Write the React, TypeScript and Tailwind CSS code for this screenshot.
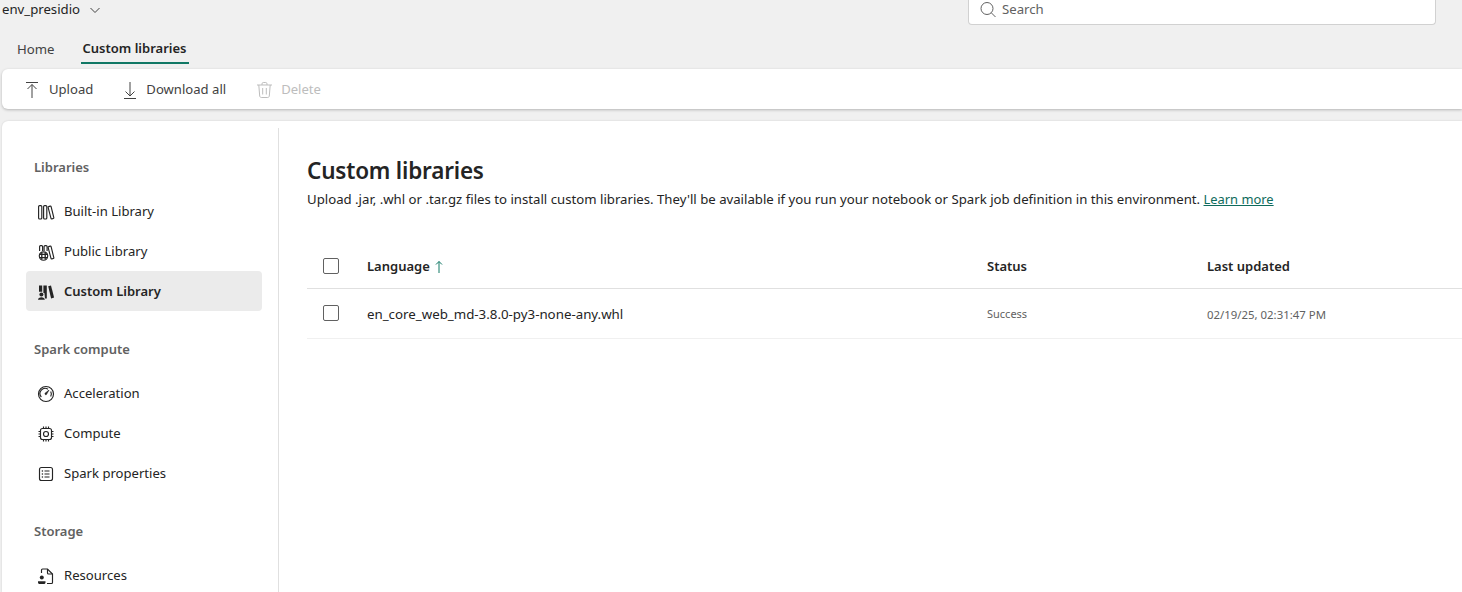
import React from "react";

const S = { fill: "none", stroke: "currentColor", strokeWidth: 1.15 } as const;

const Box = ({ children, className = "" }: { children: React.ReactNode; className?: string }) => (
  <svg width="20" height="20" viewBox="0 0 20 20" className={"shrink-0 " + className}>{children}</svg>
);

const Tilted = () => (
  <path d="M12.6 4.6l1.6-.5c.5-.1.8.1.9.5l2.7 11c.1.5-.1.8-.5.9l-1.4.4c-.5.1-.8-.1-.9-.5L12.1 5.4c-.1-.4.1-.7.5-.8z" {...S} />
);
const Books = () => (
  <Box>
    <rect x="2.6" y="3.6" width="3.2" height="13.4" rx="1" {...S} />
    <rect x="7.6" y="3.6" width="3.2" height="13.4" rx="1" {...S} />
    <Tilted />
  </Box>
);
const PublicBooks = () => (
  <Box>
    <path d="M3.600 9V4.600c0-.6.4-1 1-1h1c.6 0 1 .4 1 1V9M8.100 9V4.600c0-.6.4-1 1-1h1c.6 0 1 .4 1 1V9" {...S} />
    <Tilted />
    <circle cx="7.500" cy="14" r="4.200" {...S} />
    <path d="M5.800 10.500v7M9.200 10.500v7M3.500 12.400h8M3.500 15.600h8" fill="none" stroke="currentColor" strokeWidth="1.3" />
  </Box>
);
const CustomBooks = () => (
  <Box>
    <path d="M3 3.400h3.200v6.400H3zM7.400 3.400h3.400v7.600H7.400z" fill="currentColor" />
    <path d="M12.200 4.200l2.800-.8 3.100 12.200-3 .9z" fill="currentColor" />
    <circle cx="5.400" cy="12.400" r="2" fill="currentColor" />
    <path d="M2 17.800c0-1.700 1.500-2.600 3.400-2.600s3.400.9 3.400 2.600z" fill="currentColor" />
    <path d="M8.400 11h2.400v5.500H9z" fill="currentColor" />
  </Box>
);
const Gauge = () => (
  <Box>
    <circle cx="10" cy="10" r="7.5" {...S} />
    <path d="M5.300 13A5.200 5.200 0 0 1 12 5.200M14.700 7.500a5.200 5.200 0 0 1 0 5" {...S} />
    <path d="M9 9.300l4-3.200-2.600 4.500a1 1 0 0 1-1.400-1.300z" fill="currentColor" stroke="currentColor" strokeWidth="0.6" />
  </Box>
);
const Chip = () => (
  <Box>
    <rect x="4.500" y="4.500" width="11" height="11" rx="2" {...S} />
    <circle cx="10" cy="10" r="2.500" {...S} />
    <path d="M7.500 2.500v2M10 2.500v2M12.500 2.500v2M7.500 15.500v2M10 15.500v2M12.500 15.500v2M2.500 7.500h2M2.500 10h2M2.500 12.500h2M15.500 7.500h2M15.500 10h2M15.500 12.500h2" {...S} />
  </Box>
);
const Props = () => (
  <Box>
    <rect x="3.500" y="3.500" width="13" height="13" rx="2" {...S} />
    <path d="M8.500 7h5M8.500 10h5M8.500 13h5" {...S} />
    <circle cx="6.400" cy="7" r=".8" fill="currentColor" />
    <circle cx="6.400" cy="10" r=".8" fill="currentColor" />
    <circle cx="6.400" cy="13" r=".8" fill="currentColor" />
  </Box>
);
const ResourceFile = () => (
  <Box>
    <path d="M5.500 7V4c0-.6.4-1 1-1h5l5 5v8.500c0 .6-.4 1-1 1h-4.500" {...S} />
    <path d="M11.500 3v4c0 .6.4 1 1 1h4" {...S} />
    <circle cx="5.800" cy="11.600" r="2" fill="currentColor" />
    <path d="M2 15.200h7.500v1.300c0 .9-.7 1.500-1.600 1.500H3.600c-.9 0-1.600-.6-1.600-1.500z" fill="currentColor" />
  </Box>
);
const Trash = () => (
  <Box>
    <path d="M3 5h15M8 5V3.800c0-.8.6-1.300 1.300-1.300h2.400c.7 0 1.300.5 1.300 1.300V5M4.800 5l.9 11c.1.9.8 1.500 1.600 1.500h6.400c.8 0 1.500-.6 1.600-1.500l.9-11M8.700 8v6.500M12.300 8v6.500" fill="none" stroke="currentColor" strokeWidth="1" />
  </Box>
);

const Item = ({ icon, label, active = false }: { icon: React.ReactNode; label: string; active?: boolean }) => (
  <div className={"flex h-10 items-center gap-2 rounded-[4px] pl-[10px] pt-[2px] text-[#242424] " + (active ? "bg-[#ebebeb] text-[13px] font-semibold" : "text-[13.1px]")}>
    {icon}
    <span>{label}</span>
  </div>
);

const Section = ({ title, children }: { title: string; children: React.ReactNode }) => (
  <div>
    <div className="flex h-10 items-center pl-2 pt-[2px] text-[13px] font-semibold text-[#616161]">{title}</div>
    <div className="mt-[4px]">{children}</div>
  </div>
);

const Check = () => <div className="h-4 w-4 rounded-[2px] border border-[#616161] bg-white" />;

export default function App() {
  return (
    <div className="flex h-[592px] w-[1462px] flex-col overflow-hidden bg-[#f0f0f0] text-[#242424]" style={{ fontFamily: '"Noto Sans", sans-serif' }}>
      <div className="flex h-[25px] shrink-0 items-start justify-between pl-[2px] pr-[26px]">
        <div className="flex h-[19px] items-center gap-[9px] text-[13.2px]">
          <span>env_presidio</span>
          <svg width="12" height="12" viewBox="0 0 12 12" className="text-[#424242]"><path d="M1.500 4l4.500 4.500L10.500 4" fill="none" stroke="currentColor" /></svg>
        </div>
        <div className="flex h-[25px] w-[468px] items-center gap-[4px] rounded-b-[4px] border border-t-0 border-[#d1d1d1] bg-white pb-[5px] pl-[11px]">
          <svg width="18" height="18" viewBox="0 0 18 18" className="text-[#616161]"><circle cx="7" cy="7.500" r="6" fill="none" stroke="currentColor" /><path d="M11.300 11.800l4.200 4.200" fill="none" stroke="currentColor" /></svg>
          <span className="text-[13.2px] text-[#616161]">Search</span>
        </div>
      </div>
      <div className="flex h-[44px] shrink-0 items-start pl-[17px] text-[13.2px]">
        <div className="flex h-[39px] items-center pt-[11px] text-[#424242]">Home</div>
        <div className="ml-[26px] flex h-[39px] items-center border-b-2 border-[#117865] px-[2px] pt-[11px] text-[13px] font-semibold">Custom libraries</div>
      </div>
      <div className="ml-[2px] flex h-[40px] shrink-0 items-center gap-[27px] rounded-l-[6px] bg-white pl-[20px] pt-[1px] text-[13.1px] text-[#424242] shadow-[0_1px_3px_rgba(0,0,0,0.25)]">
        <div className="flex items-center gap-[7px]">
          <svg width="20" height="20" viewBox="0 0 20 20"><path d="M4 2.500h12M10 18V4.500M5.500 9l4.500-4.500L14.500 9" fill="none" stroke="currentColor" /></svg>
          Upload
        </div>
        <div className="flex items-center gap-[6px]">
          <svg width="20" height="20" viewBox="0 0 20 20"><path d="M4 18.500h12M10 2v14M5.500 11.500l4.500 4.500 4.500-4.500" fill="none" stroke="currentColor" /></svg>
          Download all
        </div>
        <div className="ml-[1px] flex items-center gap-[7px] text-[#bdbdbd]">
          <Trash />
          Delete
        </div>
      </div>
      <div className="ml-[2px] mt-[12px] flex min-h-0 flex-1 rounded-tl-[6px] bg-white pt-[7px] shadow-[0_0_2px_rgba(0,0,0,0.15)]">
        <div className="flex w-[277px] shrink-0 flex-col gap-[18px] border-r border-[#e0e0e0] pl-[24px] pr-[16px] pt-[19px]">
          <Section title="Libraries">
            <Item icon={<Books />} label="Built-in Library" />
            <Item icon={<PublicBooks />} label="Public Library" />
            <Item icon={<CustomBooks />} label="Custom Library" active />
          </Section>
          <Section title="Spark compute">
            <Item icon={<Gauge />} label="Acceleration" />
            <Item icon={<Chip />} label="Compute" />
            <Item icon={<Props />} label="Spark properties" />
          </Section>
          <Section title="Storage">
            <Item icon={<ResourceFile />} label="Resources" />
          </Section>
        </div>
        <div className="min-w-0 flex-1 pl-[28px]">
          <h1 className="mt-[27px] text-[22.5px] font-semibold leading-[32px] tracking-[-0.2px] text-[#242424]">Custom libraries</h1>
          <p className="mt-[2px] text-[13.2px] leading-[20px]">
            Upload .jar, .whl or .tar.gz files to install custom libraries. They'll be available if you run your notebook or Spark job definition in this environment.{" "}
            <span className="text-[12.9px] text-[#0e6b5c] underline">Learn more</span>
          </p>
          <div className="mt-[36px] flex h-[44px] items-center border-b border-[#e0e0e0] text-[13px] font-semibold">
            <div className="w-[60px] pb-[2px] pl-[16px]"><Check /></div>
            <div className="flex w-[620px] items-center gap-[5px]">
              Language
              <svg width="8" height="14" viewBox="0 0 8 14" className="text-[#117865]"><path d="M4 13V1.500M1 4.500l3-3 3 3" fill="none" stroke="currentColor" /></svg>
            </div>
            <div className="w-[220px]">Status</div>
            <div>Last updated</div>
          </div>
          <div className="flex h-[50px] items-center border-b border-[#f0f0f0] text-[13.3px]">
            <div className="w-[60px] pb-[2px] pl-[16px]"><Check /></div>
            <div className="w-[620px] pt-[2px]">en_core_web_md-3.8.0-py3-none-any.whl</div>
            <div className="w-[220px] pt-[2px] text-[11px] text-[#616161]">Success</div>
            <div className="pt-[2px] text-[11.4px] text-[#616161]">02/19/25, 02:31:47 PM</div>
          </div>
        </div>
      </div>
    </div>
  );
}
